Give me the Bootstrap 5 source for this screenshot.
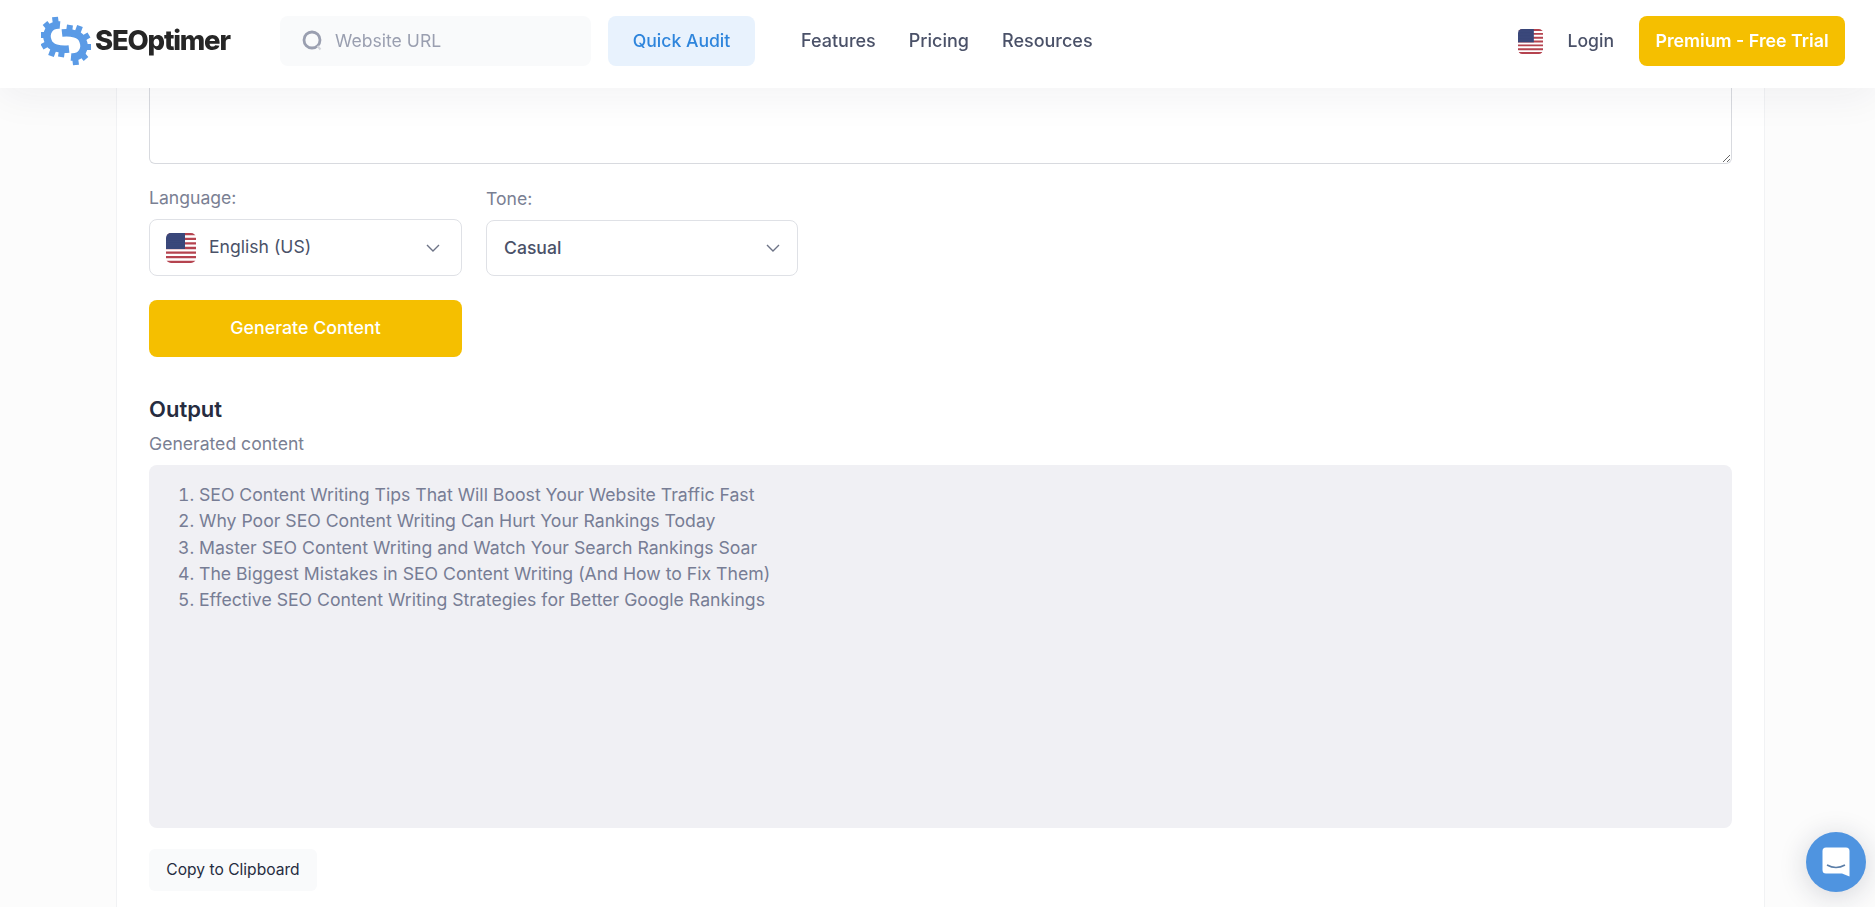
<!DOCTYPE html>
<html lang="en">
<head>
    <meta charset="UTF-8">
    <meta name="viewport" content="width=device-width, initial-scale=1.0">
    <title>SEOptimer - AI Content Generator</title>
    <link href="https://cdn.jsdelivr.net/npm/bootstrap@5.3.0/dist/css/bootstrap.min.css" rel="stylesheet">
    <style>
        html, body { height: 907px; overflow: hidden; }
        body { background: #fcfcfc; font-family: Inter, "Liberation Sans", sans-serif; color: #4a5168; }
        .top-bar { height: 88px; background: #fff; box-shadow: 0 8px 40px rgba(30, 35, 60, .06); padding: 0 30px 6px 41px; z-index: 10; }
        .brand-box { width: 239px; color: #262626; font-weight: 800; font-size: 27.5px; letter-spacing: -1.2px; text-decoration: none; }
        .search-box { width: 311px; height: 50px; background: #f9fafb; border-radius: 8px; padding-left: 22px; color: #9a9fb0; font-size: 17.6px; gap: 11px; }
        .audit-btn { width: 147px; height: 50px; margin-left: 17px; background: #e8f2fd; color: #2e85dc; border-radius: 8px; font-size: 17.6px; font-weight: 500; }
        .menu-link { color: #4a5168; font-size: 18px; line-height: 24px; font-weight: 500; text-decoration: none; }
        .menu-row { margin-left: 46px; gap: 33px; margin-bottom: 1px; }
        .login-link { color: #4a5168; font-size: 17.6px; font-weight: 500; text-decoration: none; margin: 0 25px; }
        .yellow-btn { background: #f5bf00; color: #fff; border-radius: 8px; font-weight: 600; border: 0; }
        .trial-btn { width: 206px; height: 50px; font-size: 17.8px; padding: 0; }
        .main-sheet { width: 1649px; height: 907px; margin-left: 116px; background: #fff; border-left: 1px solid #f1f2f4; border-right: 1px solid #f1f2f4; padding: 0 32px; }
        .prompt-area { display: block; width: 100%; height: 164px; resize: both; border: 1px solid #d8dadf; border-top: 0; border-radius: 0 0 6px 6px; background: transparent; margin-bottom: 22px; }
        .field-label { color: #7a8093; font-size: 17.6px; line-height: 24px; margin-bottom: 9px; }
        .lang-col { width: 313px; }
        .tone-col { width: 312px; margin-left: 24px; padding-top: 1px; }
        .pick-box { height: 57px; border: 1px solid #dfe1e6; border-radius: 8px; padding: 0 17px; font-size: 17.6px; color: #4a5168; }
        .lang-col .pick-box { padding-left: 16px; }
        .flag-gap { gap: 13px; }
        .tone-col .pick-box { height: 56px; }
        .generate-btn { display: block; width: 313px; height: 57px; font-size: 17.8px; font-weight: 500; }
        .output-title { font-size: 22px; font-weight: 600; color: #262c40; margin: 0; padding-top: 14px; line-height: 28px; }
        .output-label { margin-top: 9px; }
        .output-box { height: 363px; background: #f0f0f4; border-radius: 8px; padding: 17px 20px; color: #777d95; font-size: 17.65px; line-height: 26.3px; }
        .output-box ol { margin: 0; padding-left: 30px; }
        .copy-btn { display: block; width: 168px; height: 42px; margin-top: 21px; background: #f9fafb; border: 0; border-radius: 6px; color: #262c40; font-size: 15.6px; padding: 0; }
        .chat-bubble { right: 9px; bottom: 15px; width: 60px; height: 60px; background: #4f94e0; box-shadow: 0 4px 28px rgba(30, 35, 60, .18); z-index: 20; }
    </style>
</head>
<body>
    <nav class="top-bar fixed-top d-flex align-items-center">
        <a class="brand-box d-flex align-items-center" href="#">
            <svg width="50" height="52" viewBox="5 3 50 52" fill="none">
                <g id="gear-half" stroke="#5b9be6">
                    <path d="M24 13 C13 12 9 22 12 29 C14 36 24 38 33 37" stroke-width="7.5"/>
                    <path d="M19 5 L20 13 M9 11 L14 17 M4 23 L11 23 M6 35 L13 31 M15 44 L18 36 M25 45 L26 38" stroke-width="6"/>
                </g>
                <use href="#gear-half" transform="rotate(180 29.5 29)"/>
            </svg>
            <span class="ms-1">SEOptimer</span>
        </a>
        <div class="search-box d-flex align-items-center">
            <svg width="22" height="22" viewBox="0 0 22 22" fill="none"><circle cx="10" cy="10" r="8" stroke="#9a9fb0" stroke-width="2.8"/><path d="M15.5 16 L18.5 19.5" stroke="#d3d5dc" stroke-width="2"/></svg>
            <span>Website URL</span>
        </div>
        <div class="audit-btn d-flex align-items-center justify-content-center">Quick Audit</div>
        <div class="menu-row d-flex">
            <a class="menu-link" href="#">Features</a>
            <a class="menu-link" href="#">Pricing</a>
            <a class="menu-link" href="#">Resources</a>
        </div>
        <div class="ms-auto d-flex align-items-center">
            <svg width="25" height="25" viewBox="0 0 30 30"><use href="#flag-us"/></svg>
            <a class="login-link" href="#">Login</a>
            <button class="yellow-btn trial-btn" type="button">Premium - Free Trial</button>
        </div>
    </nav>

    <svg width="0" height="0" class="d-block">
        <defs>
            <clipPath id="flag-clip"><rect width="30" height="30" rx="5"/></clipPath>
            <pattern id="flag-stars" width="1.8" height="1.8" patternUnits="userSpaceOnUse"><rect width="2" height="2" fill="#2f3d72"/><circle cx=".9" cy=".9" r=".35" fill="#8f99bd"/></pattern>
            <g id="flag-us" clip-path="url(#flag-clip)">
                <rect width="30" height="30" fill="#fff"/>
                <path d="M0 1.2h30M0 5.8h30M0 10.4h30M0 15h30M0 19.6h30M0 24.2h30M0 28.8h30" stroke="#b5434f" stroke-width="2.3"/>
                <rect width="19" height="16" fill="url(#flag-stars)"/>
            </g>
        </defs>
    </svg>

    <main class="main-sheet">
        <textarea class="prompt-area" aria-label="Prompt"></textarea>
        <div class="d-flex">
            <div class="lang-col">
                <div class="field-label">Language:</div>
                <div class="pick-box d-flex align-items-center justify-content-between">
                    <span class="d-flex align-items-center flag-gap">
                        <svg width="30" height="30" viewBox="0 0 30 30"><use href="#flag-us"/></svg>English (US)
                    </span>
                    <svg width="14" height="8" viewBox="0 0 14 8" fill="none" class="me-1"><path d="M1 1 L7 7 L13 1" stroke="#6d7386" stroke-width="1.4"/></svg>
                </div>
            </div>
            <div class="tone-col">
                <div class="field-label">Tone:</div>
                <div class="pick-box d-flex align-items-center justify-content-between fw-medium">
                    <span>Casual</span>
                    <svg width="14" height="8" viewBox="0 0 14 8" fill="none"><path d="M1 1 L7 7 L13 1" stroke="#6d7386" stroke-width="1.4"/></svg>
                </div>
            </div>
        </div>
        <button class="yellow-btn generate-btn mt-4" type="button">Generate Content</button>
        <h2 class="output-title mt-4">Output</h2>
        <div class="field-label output-label">Generated content</div>
        <div class="output-box">
            <ol>
                <li>SEO Content Writing Tips That Will Boost Your Website Traffic Fast</li>
                <li>Why Poor SEO Content Writing Can Hurt Your Rankings Today</li>
                <li>Master SEO Content Writing and Watch Your Search Rankings Soar</li>
                <li>The Biggest Mistakes in SEO Content Writing (And How to Fix Them)</li>
                <li>Effective SEO Content Writing Strategies for Better Google Rankings</li>
            </ol>
        </div>
        <button class="copy-btn" type="button">Copy to Clipboard</button>
    </main>

    <div class="chat-bubble position-fixed rounded-circle d-flex align-items-center justify-content-center">
        <svg width="28" height="30" viewBox="0 0 28 30"><path d="M4 0.5 H24 A3.5 3.5 0 0 1 27.5 4 V29.5 L20 26.5 H4 A3.5 3.5 0 0 1 0.5 23 V4 A3.5 3.5 0 0 1 4 0.5 Z" fill="#fff"/><path d="M5 18 Q14 23 23 18" fill="none" stroke="#5b7ea8" stroke-width="1.5"/></svg>
    </div>

    <script src="https://cdn.jsdelivr.net/npm/bootstrap@5.3.0/dist/js/bootstrap.bundle.min.js"></script>
</body>
</html>
